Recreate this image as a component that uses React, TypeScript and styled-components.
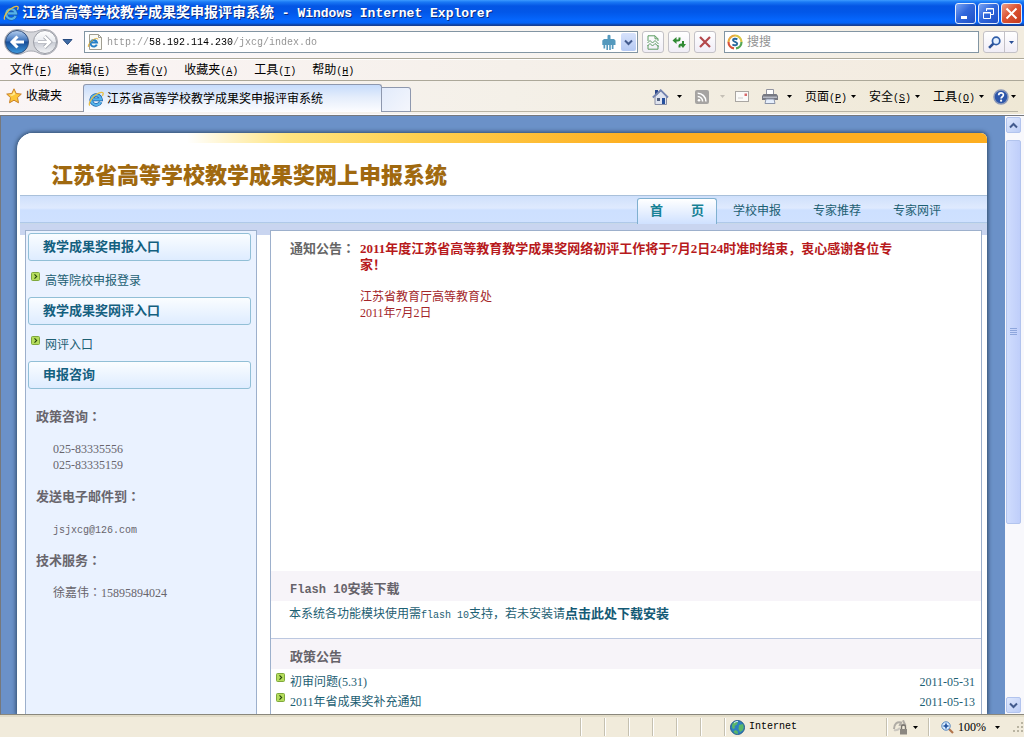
import React from "react";
import styled, { createGlobalStyle } from "styled-components";

const CJK = `"Liberation Serif", "Noto Sans CJK SC", sans-serif`;
const teal = "#1d6073";

const GlobalStyle = createGlobalStyle`
  *, *::before, *::after { box-sizing: border-box; }
  body { margin: 0; font: 12px/16px ${CJK}; color: #000; overflow: hidden; }
  h1, h2, h3, p, ul, dl, dd { margin: 0; padding: 0; }
  ul { list-style: none; }
  a { color: inherit; text-decoration: none; }
  button { margin: 0; padding: 0; border: 0; background: none; font: inherit; color: inherit; white-space: nowrap; }
  input { margin: 0; padding: 0; border: 0; outline: 0; background: none; font: inherit; min-width: 0; }
  svg { display: block; flex: none; }
`;

const Mono = styled.span<{ $size?: number }>`
  font-family: "Liberation Mono", monospace;
  font-size: ${(p) => p.$size ?? 10}px;
  line-height: 1;
`;

/* The TC face centres its full-width colon in the cell. */
const Centered = styled.span`
  font-family: "Noto Sans CJK TC", sans-serif;
  line-height: 1;
`;

/* ---------- window frame ---------- */

const Window = styled.div`
  display: flex;
  flex-direction: column;
  height: 100vh;
  background: #f5f1ec;
`;

const TitleBar = styled.header`
  display: flex;
  align-items: center;
  gap: 3px;
  height: 26px;
  flex: none;
  padding: 0 2px 0 3px;
  background: linear-gradient(#3d9bff 0, #1a79f5 2px, #0455e4 6px, #0257e8 12px, #0566fd 20px, #0463f5 23px, #103f9e 25px, #1a3f8c 26px);
`;

const WindowTitle = styled.h1`
  flex: 1;
  font-size: 14px;
  line-height: 20px;
  font-weight: bold;
  color: #fff;
  text-shadow: 1px 1px 0 #0a2a80;
  white-space: nowrap;
`;

const FrameButtons = styled.div`
  display: flex;
  gap: 2px;
`;

const FrameButton = styled.button<{ $close?: boolean }>`
  display: grid;
  place-items: center;
  width: 21px;
  height: 21px;
  border: 1px solid #e4edfc;
  border-radius: 3px;
  background: ${(p) =>
    p.$close
      ? "linear-gradient(135deg, #eda08a, #dc5434 45%, #c43a1c)"
      : "linear-gradient(135deg, #7aa4f4, #3168dc 45%, #1d4fc6)"};
`;

const AddressRow = styled.div`
  display: flex;
  align-items: center;
  height: 33px;
  flex: none;
  padding: 0 6px 0 4px;
  border-bottom: 1px solid #aca899;
  background: linear-gradient(90deg, #fdf9fc, #f7f3ee 60%, #f2ecdf);
`;

const NavHistory = styled.div`
  display: flex;
  align-items: center;
  width: 80px;
  flex: none;
`;

const AddressBox = styled.div`
  display: flex;
  align-items: center;
  flex: 1;
  height: 22px;
  padding: 0 1px 0 2px;
  border: 1px solid #8295a3;
  background: #fff;
`;

const AddressInput = styled.input`
  flex: 1;
  height: 18px;
  margin-left: 4px;
  font: 10px "Liberation Mono", monospace;
  color: transparent;
  background: linear-gradient(90deg, #909090 42px, #000 42px, #000 126px, #909090 126px);
  background-clip: text;
  -webkit-background-clip: text;
`;

const DropButton = styled.button`
  display: grid;
  place-items: center;
  width: 15px;
  height: 18px;
  margin-left: 5px;
  border-radius: 2px;
  background: linear-gradient(#d7e2fb, #b5c9f3);
`;

const ToolButtons = styled.div`
  display: flex;
  gap: 4px;
  margin: 0 8px 0 4px;
`;

const ToolButton = styled.button`
  display: grid;
  place-items: center;
  width: 22px;
  height: 22px;
  border: 1px solid #c3c1c6;
  border-radius: 3px;
  background: linear-gradient(#fff, #f0edf6);
`;

const SearchBox = styled(AddressBox)`
  flex: 0 1 255px;
  padding-left: 2px;
  gap: 4px;
  input { flex: 1; font-size: 12px; }
  input::placeholder { color: #929292; opacity: 1; }
`;

const SearchButtons = styled.div`
  display: flex;
  margin-left: 4px;
  border: 1px solid #c3c1c6;
  border-radius: 3px;
  background: linear-gradient(#fff, #f0edf6);
  button { display: grid; place-items: center; width: 20px; height: 20px; }
  button + button { width: 13px; border-left: 1px solid #c3c1c6; }
`;

const MenuBar = styled.nav`
  display: flex;
  align-items: center;
  gap: 16px;
  height: 22px;
  flex: none;
  padding-left: 10px;
  border-top: 1px solid #fff;
  border-bottom: 1px solid #aca899;
  background: linear-gradient(90deg, #fbf5f6, #f5f0ea 50%, #f3ebde);
`;

const TabBar = styled.div`
  display: flex;
  align-items: flex-end;
  height: 34px;
  flex: none;
  padding: 0 6px 2px 0;
  background: linear-gradient(90deg, #faf5f6, #f4f0e8 50%, #efe8d5);
  border-bottom: 1px solid #fafafd;
`;

const Favorites = styled.button`
  display: flex;
  align-items: center;
  gap: 4px;
  width: 83px;
  height: 29px;
  flex: none;
  padding: 0 0 2px 6px;
  border-bottom: 1px solid #9a9a9e;
`;

const Tab = styled.button`
  display: flex;
  align-items: center;
  gap: 3px;
  width: 299px;
  height: 28px;
  flex: 0 1 auto;
  padding-left: 4px;
  border: 1px solid #8e98ae;
  border-bottom: 0;
  border-radius: 3px 3px 0 0;
  background: linear-gradient(#c6dbfb, #e4edfb 45%, #fdfdff);
`;

const NewTab = styled.button`
  width: 29px;
  height: 25px;
  flex: none;
  border: 1px solid #8e98ae;
  border-left: 0;
  border-radius: 0 3px 0 0;
  background: linear-gradient(135deg, #e2ebfb, #f4f6fc);
`;

const Commands = styled.div`
  display: flex;
  align-items: center;
  justify-content: flex-end;
  flex: 1;
  height: 28px;
  padding-bottom: 2px;
  border-bottom: 1px solid #b8b3a4;
`;

const Command = styled.button<{ $w: number; $gap?: number }>`
  display: flex;
  align-items: center;
  gap: ${(p) => p.$gap ?? 8}px;
  width: ${(p) => p.$w}px;
  flex: none;
`;

/* ---------- web page ---------- */

const Viewport = styled.main`
  display: flex;
  flex: 1;
  min-height: 0;
  border: 1px solid #76787c;
  border-right: 0;
  border-bottom-color: #8a877c;
`;

const Page = styled.div`
  flex: 1;
  min-width: 0;
  display: flex;
  padding: 17px 18px 0 16px;
  overflow: hidden;
  background: #6b91c8;
`;

const SheetShadow = styled.div`
  flex: 1;
  min-width: 0;
  display: flex;
  border-radius: 16px 6px 0 0;
  box-shadow: 0 0 4px 1px #2f4a68;
`;

const Sheet = styled.div`
  flex: 1;
  min-width: 0;
  display: flex;
  flex-direction: column;
  border-radius: 16px 6px 0 0;
  overflow: hidden;
  background: #fff;
`;

const Banner = styled.header`
  height: 62px;
  flex: none;
  padding: 10px 0 0 34px;
  background: linear-gradient(90deg, #fff 170px, #ffe582 270px, #fed050 400px, #fdae20 620px) no-repeat 0 0 / 100% 10px;
`;

const SiteTitle = styled.h2`
  padding-top: 17px;
  font-size: 22px;
  line-height: 32px;
  font-weight: 900;
  color: #a0690f;
  white-space: nowrap;
`;

const SiteNav = styled.nav`
  display: flex;
  justify-content: flex-end;
  align-items: flex-end;
  height: 29px;
  flex: none;
  margin-left: 3px;
  padding-right: 30px;
  border-top: 1px solid #a9c0da;
  background: linear-gradient(#cfe0fb, #dfeafe 12px, #cde0ff 14px, #cfe1ff 26px, #8fb0d4 27px, #fff 28px);
`;

const SiteTab = styled.a<{ $active?: boolean }>`
  display: flex;
  justify-content: ${(p) => (p.$active ? "space-between" : "center")};
  width: 80px;
  height: 26px;
  padding: ${(p) => (p.$active ? "3px 12px" : "4px 0")};
  border: ${(p) => (p.$active ? "1px solid #7fb0d0" : "0")};
  border-bottom: 0;
  border-radius: 3px 3px 0 0;
  background: ${(p) => (p.$active ? "linear-gradient(#fff, #cfe1ff)" : "none")};
  color: ${(p) => (p.$active ? "#178195" : teal)};
  font-size: ${(p) => (p.$active ? 13 : 12)}px;
  font-weight: ${(p) => (p.$active ? "bold" : "normal")};
  line-height: 18px;
`;

const Columns = styled.div`
  display: flex;
  flex: 1;
  min-height: 0;
  gap: 13px;
  margin-left: 3px;
  padding: 6px 5px 0;
  background: linear-gradient(#c9d5f0, #c9d5f0) no-repeat 0 0 / 100% 11px;
`;

const Sidebar = styled.aside`
  width: 232px;
  flex: none;
  padding: 2px 5px 0 2px;
  border: 1px solid #9db0cc;
  border-bottom: 0;
  background: #eaf2ff;
`;

const SideHeading = styled.h3`
  height: 28px;
  padding-left: 14px;
  border: 1px solid #91bfd6;
  border-radius: 3px;
  background: linear-gradient(#fafdff, #deecff);
  font-size: 13px;
  line-height: 25px;
  color: #14607f;
`;

const SideLink = styled.a`
  display: flex;
  gap: 5px;
  height: 36px;
  padding: 11px 0 0 3px;
  color: ${teal};
  line-height: 18px;
`;

const Contacts = styled.dl`
  padding: 20px 0 0 8px;
  color: #68656c;
  dt { font-size: 13px; font-weight: bold; }
  dd { padding: 16px 0 16px 17px; }
`;

const Content = styled.section`
  flex: 1;
  min-width: 0;
  background: #fff;
  border: 1px solid #9db0cc;
  border-bottom: 0;
`;

const Notice = styled.article`
  display: flex;
  min-height: 340px;
  padding: 10px 20px 0 19px;
  font-size: 13px;
  h3 { width: 70px; flex: none; font-size: 13px; color: #666; }
  p { color: #a3262a; font-size: 12px; padding-bottom: 16px; white-space: nowrap; }
  strong { font-size: 13px; color: #b71a1c; }
`;

const SectionHeading = styled.h3`
  height: 30px;
  padding-left: 19px;
  background: #f7f4f9;
  font-size: 13px;
  line-height: 36px;
  color: #66636a;
`;

const FlashText = styled.p`
  height: 38px;
  padding: 5px 0 0 18px;
  border-bottom: 1px solid #bcc8e0;
  color: ${teal};
  white-space: nowrap;
  a { font-size: 13px; font-weight: bold; color: #145a75; }
`;

const NewsItem = styled.li`
  display: flex;
  gap: 5px;
  height: 20px;
  padding: 4px 6px 0 5px;
  color: ${teal};
  line-height: 18px;
  a { flex: 1; }
`;

const ScrollBar = styled.div`
  display: flex;
  flex-direction: column;
  width: 19px;
  flex: none;
  padding: 1px 3px 1px 1px;
  background: #f8f8fc;
`;

const ScrollButton = styled.button`
  display: grid;
  place-items: center;
  width: 15px;
  height: 16px;
  border: 1px solid #b2c4ee;
  border-radius: 2px;
  background: linear-gradient(135deg, #dfe8fd, #bccdf6);
`;

const ScrollTrack = styled.div`
  flex: 1;
  padding-top: 7px;
`;

const ScrollThumb = styled.div`
  display: grid;
  place-items: center;
  height: 69%;
  border: 1px solid #b2c4ee;
  border-radius: 2px;
  background: linear-gradient(90deg, #cfdcfd, #bfcefa);
`;

/* ---------- status bar ---------- */

const StatusBar = styled.footer`
  display: flex;
  align-items: center;
  justify-content: flex-end;
  height: 22px;
  flex: none;
  border-top: 2px solid #e2dcc8;
  background: #f1ebdb;
`;

const StatusCell = styled.div<{ $w: number }>`
  display: flex;
  align-items: center;
  gap: 4px;
  width: ${(p) => p.$w}px;
  height: 18px;
  padding-left: 5px;
  border-left: 1px solid #c5c0b0;
  box-shadow: inset 1px 0 #fff;
`;

const ZoomCell = styled(StatusCell)`
  padding: 0 12px;
  span { flex: 1; }
`;

/* ---------- icons ---------- */

const IE = ({ size = 16 }: { size?: number }) => (
  <svg width={size} height={size} viewBox="0 0 16 16" fill="none">
    <path d="M12.600 11A4.900 4.900 0 1 1 13 8.400H5" stroke="#1c5fa8" strokeWidth="3.600" />
    <path d="M12.600 11A4.900 4.900 0 1 1 13 8.400H5" stroke="#54b3ea" strokeWidth="2.300" />
    <path d="M1.800 14.600C-.2 12 4.400 5.600 9 3c3-1.800 6-2.400 6.200-.6.1.8-.3 1.600-.8 2.400" stroke="#e9bf45" strokeWidth="1.300" />
  </svg>
);

const Arrow = ({ color = "#000" }: { color?: string }) => (
  <svg width="5" height="3" viewBox="0 0 5 3"><path d="M0 0h5L2.500 3z" fill={color} /></svg>
);

const Chevron = ({ up }: { up?: boolean }) => (
  <svg width="9" height="7" viewBox="0 0 9 7" fill="none">
    <path d={up ? "M1 5.500 4.500 2 8 5.500" : "M1 1.500 4.500 5 8 1.500"} stroke="#435b8e" strokeWidth="2" />
  </svg>
);

const Bullet = () => (
  <svg width="9" height="9" viewBox="0 0 9 9" fill="none">
    <rect x=".5" y=".5" width="8" height="8" rx="1" fill="#b4dc5c" stroke="#7fa83c" />
    <path d="M3.500 2.300 5.700 4.500 3.500 6.700" stroke="#24420c" strokeWidth="1.100" />
  </svg>
);

const BackForward = () => (
  <svg width="55" height="28" viewBox="0 0 55 28" fill="none">
    <defs>
      <linearGradient id="back" x2="0" y2="1">
        <stop stopColor="#b8d1f0" /><stop offset=".45" stopColor="#3c72bb" />
        <stop offset=".5" stopColor="#174c98" /><stop offset="1" stopColor="#3f9ce0" />
      </linearGradient>
      <linearGradient id="fwd" x2="0" y2="1">
        <stop stopColor="#fff" /><stop offset=".48" stopColor="#e9ebf0" />
        <stop offset=".5" stopColor="#c7cad3" /><stop offset="1" stopColor="#f5f6f8" />
      </linearGradient>
    </defs>
    <path d="M13 1.500C20 1.500 20 4 27 4s7-2.500 14-2.500a12.500 12.500 0 0 1 0 25C34 26.500 34 23 27 23s-7 3.500-14 3.500a12.500 12.500 0 0 1 0-25Z" fill="#d4d5da" stroke="#a9abb3" />
    <circle cx="13" cy="14" r="11.500" fill="url(#back)" stroke="#35517d" />
    <path d="M20 14H8m5.500-5.500L8 14l5.500 5.500" stroke="#fff" strokeWidth="3" />
    <circle cx="41" cy="14" r="11.500" fill="url(#fwd)" stroke="#9a9ca5" />
    <path d="M34 14h12m-5.500-5.500L46 14l-5.500 5.500" stroke="#a8abb4" strokeWidth="4" />
    <path d="M34 14h12m-5.500-5.500L46 14l-5.500 5.500" stroke="#fff" strokeWidth="2.400" />
  </svg>
);

const PageIE = () => (
  <svg width="16" height="18" viewBox="0 0 16 18" fill="none">
    <path d="M2.500 1.500h9l3 3v12h-12z" fill="#fbfbf5" stroke="#a09e92" />
    <path d="M11.500 1.500v3h3" stroke="#a09e92" />
    <path d="M9.800 11.600A3.300 3.300 0 1 1 10 9.500H4.500" stroke="#2681c8" strokeWidth="2" />
    <path d="M1.500 14C.5 12 4 7.500 7.500 6c2-.8 3.500-.8 3.300.4" stroke="#e0ae32" />
  </svg>
);

const Paw = () => (
  <svg width="14" height="16" viewBox="0 0 14 16">
    <path d="M5.500 1.500q1.500-1.500 3 0V5H12l1.500 1.500V11h-2v4H9.800v-4h-1v5H7.200v-5H6v5H4.400v-5H3.200v3.500H1.500V11H.3V6.500L2 5h3.500z" fill="#5499bd" />
  </svg>
);

const Compat = () => (
  <svg width="12" height="15" viewBox="0 0 12 15" fill="none" stroke="#5d9d63">
    <path d="M1 6V.8h7l3 3V6M8 .8v3h3M1 10v4.200h10V10" />
    <path d="m.5 8 2.500-2.500L5.500 8 8 5.500 11.500 9M.5 11 3 8.500 5.500 11 8 8.500l3.500 3" />
  </svg>
);

const Refresh = () => (
  <svg width="14" height="13" viewBox="0 0 14 13" fill="none" stroke="#2f8a33" strokeWidth="2">
    <path d="M7.500 1.500v1.500q0 1.500-1.500 1.500H3" />
    <path d="M4.500 1v7L.5 4.500z" fill="#2f8a33" stroke="none" />
    <path d="M7.500 11.500V10q0-1.500 2-1.500L11 8.500V5" />
    <path d="M7.500 8h6.500L11 12z" fill="#2f8a33" stroke="none" />
  </svg>
);

const Stop = () => (
  <svg width="12" height="12" viewBox="0 0 12 12" fill="none" stroke="#b3474b" strokeWidth="2.200">
    <path d="M1 1l10 10M11 1 1 11" />
  </svg>
);

const Soso = () => (
  <svg width="16" height="16" viewBox="0 0 16 16" fill="none">
    <path d="M8 1.500A6.500 6.500 0 0 1 14.500 8" stroke="#d9c445" strokeWidth="2.200" />
    <path d="M14.500 8A6.500 6.500 0 0 1 9 14.400" stroke="#57a754" strokeWidth="2.200" />
    <path d="M7 14.400A6.500 6.500 0 0 1 1.500 8" stroke="#d9533a" strokeWidth="2.200" />
    <path d="M1.500 8A6.500 6.500 0 0 1 8 1.500" stroke="#e8a93e" strokeWidth="2.200" />
    <path d="M10.300 5.500C9 4.300 5.900 4.500 6 6.300S10.300 7.800 10.200 9.700 6.900 11.700 5.500 10.300" stroke="#27689c" strokeWidth="1.900" />
  </svg>
);

const Magnifier = () => (
  <svg width="13" height="13" viewBox="0 0 12 12" fill="none">
    <path d="M5 7 1 11" stroke="#2a4f95" strokeWidth="2.400" />
    <circle cx="7.500" cy="4.500" r="3.400" fill="#e4f0ff" stroke="#2f5da8" strokeWidth="1.600" />
  </svg>
);

const Star = () => (
  <svg width="16" height="16" viewBox="0 0 16 16">
    <path d="m8 .8 2.200 4.700 5.100.6-3.800 3.500 1 5.200L8 12.200l-4.500 2.600 1-5.200L.7 6.100l5.100-.6z" fill="#fcc638" stroke="#c9812a" />
    <path d="m8 3 1.400 3.300L6 8l-3-1.200 3.400-.5z" fill="#ffe990" />
  </svg>
);

const Home = () => (
  <svg width="17" height="16" viewBox="0 0 17 16">
    <path d="M3 1h3v5H3z" fill="#2b4689" />
    <path d="M3 7.500 9 2l5.500 5.500V15.500H3z" fill="#dfe3ee" stroke="#8a8fa5" />
    <path d="M.8 8.500 8.700 1.200 16 8.500" fill="none" stroke="#7484b0" strokeWidth="1.800" />
    <path d="M10 9h3v6h-3z" fill="#27509c" /><path d="M5 9h3v3H5z" fill="#4f5e80" />
  </svg>
);

const Rss = () => (
  <svg width="14" height="14" viewBox="0 0 14 14" fill="none">
    <rect width="14" height="14" rx="2" fill="#a6a4a2" />
    <circle cx="4" cy="10.300" r="1.300" fill="#fff" />
    <path d="M2.700 6.500a4.900 4.900 0 0 1 4.900 4.900M2.700 3.200a8.200 8.200 0 0 1 8.200 8.200" stroke="#fff" strokeWidth="1.500" />
  </svg>
);

const Mail = () => (
  <svg width="14" height="11" viewBox="0 0 14 11">
    <rect x=".5" y=".5" width="13" height="10" fill="#fbfaf8" stroke="#a9a6a2" />
    <path d="M9.500 2.500h2.500V5H9.500z" fill="#d9686a" /><path d="M3 7h5" stroke="#ccc" />
  </svg>
);

const Printer = () => (
  <svg width="16" height="15" viewBox="0 0 16 15">
    <path d="M4.500.5h7V6h-7z" fill="#fff" stroke="#9294a0" />
    <path d="M1.500 5h13L16 7v4H0V7z" fill="#777982" /><path d="M1 7.500h14v1.500H1z" fill="#b6b9c3" />
    <path d="M4 10h8l1 4.500H3z" fill="#e6effc" stroke="#8b94a8" />
  </svg>
);

const Help = () => (
  <svg width="16" height="16" viewBox="0 0 16 16" fill="none">
    <circle cx="8" cy="8" r="7" fill="#2c56aa" stroke="#8b98b8" strokeWidth="1.500" />
    <path d="M5.700 6.300c0-3.200 4.700-3 4.700-.3 0 1.700-2.300 1.800-2.300 3.600" stroke="#fff" strokeWidth="1.700" />
    <circle cx="8.100" cy="11.700" r="1.100" fill="#fff" />
  </svg>
);

const Globe = () => (
  <svg width="15" height="15" viewBox="0 0 15 15">
    <circle cx="7.500" cy="7.500" r="7" fill="#2c7fc0" stroke="#255b87" />
    <path d="M3 3q3-2.500 5-1.500L7 4.500 4.500 6 5 8l-2 1Q1 6 3 3M9 5l4-1q1.500 4-.5 6.500L10 12 8.500 9zM5 10l2.500 1 .5 3q-3 0-4.500-2z" fill="#5bb767" />
    <path d="M4 3q2-2 4-1.500" stroke="#cdeafe" fill="none" />
  </svg>
);

const Lock = () => (
  <svg width="17" height="15" viewBox="0 0 17 15" fill="none">
    <path d="M2 9C2 4 5 1.500 9 2.500l-1 2.300 5-.3L11 .3" stroke="#b0aca5" strokeWidth="2" />
    <path d="M2 10q3 1 6-2" stroke="#cbc7bf" strokeWidth="2" />
    <path d="M9.500 9V7a2 2 0 0 1 4 0v2" stroke="#77736d" strokeWidth="1.400" />
    <path d="M8 9h7v5.500H8z" fill="#8b8781" />
  </svg>
);

const ZoomIn = () => (
  <svg width="13" height="13" viewBox="0 0 13 13" fill="none">
    <path d="m8 8 4 4" stroke="#b2744b" strokeWidth="2.200" />
    <circle cx="5" cy="5" r="4.200" fill="#d9ecff" stroke="#4f83bd" />
    <path d="M5 2.500v5M2.500 5h5" stroke="#1c4f9c" strokeWidth="1.600" />
  </svg>
);

const Grip = () => (
  <svg width="12" height="12" viewBox="0 0 12 12" fill="#b9b4a2">
    <path d="M9 1h2v2H9zM9 5h2v2H9zM5 5h2v2H5zM9 9h2v2H9zM5 9h2v2H5zM1 9h2v2H1z" />
  </svg>
);

const Label = ({ text, mark }: { text: string; mark: string }) => (
  <span>{text}<Mono>(<u>{mark}</u>)</Mono></span>
);

const Colon = () => <Centered>：</Centered>;

const menus = [
  ["文件", "F"], ["编辑", "E"], ["查看", "V"], ["收藏夹", "A"], ["工具", "T"], ["帮助", "H"],
];

const news = [
  { title: "初审问题(5.31)", date: "2011-05-31" },
  { title: "2011年省成果奖补充通知", date: "2011-05-13" },
];

export default function App() {
  return (
    <Window>
      <GlobalStyle />
      <TitleBar>
        <IE />
        <WindowTitle>
          江苏省高等学校教学成果奖申报评审系统<Mono $size={13}> - Windows Internet Explorer</Mono>
        </WindowTitle>
        <FrameButtons>
          <FrameButton aria-label="最小化">
            <svg width="13" height="13"><path d="M2 9h6v3H2z" fill="#fff" /></svg>
          </FrameButton>
          <FrameButton aria-label="还原">
            <svg width="13" height="13" fill="none" stroke="#fff"><path d="M4.500 4V1.500h7v6H9M4 2h8M1.500 5.500h7v6h-7zM1 6h8" /></svg>
          </FrameButton>
          <FrameButton $close aria-label="关闭">
            <svg width="13" height="13" stroke="#fff" strokeWidth="2"><path d="M1.500 1.500l10 10M11.500 1.500l-10 10" /></svg>
          </FrameButton>
        </FrameButtons>
      </TitleBar>

      <AddressRow>
        <NavHistory>
          <BackForward />
          <svg width="16" height="8" viewBox="0 0 16 8"><path d="M4 1.500h9L8.500 6.500z" fill="#3e6aa5" stroke="#274b80" /></svg>
        </NavHistory>
        <AddressBox>
          <PageIE />
          <AddressInput aria-label="地址" defaultValue="http://58.192.114.230/jxcg/index.do" />
          <Paw />
          <DropButton aria-label="地址列表"><Chevron /></DropButton>
        </AddressBox>
        <ToolButtons>
          <ToolButton aria-label="兼容性视图"><Compat /></ToolButton>
          <ToolButton aria-label="刷新"><Refresh /></ToolButton>
          <ToolButton aria-label="停止"><Stop /></ToolButton>
        </ToolButtons>
        <SearchBox>
          <Soso />
          <input aria-label="搜搜" placeholder="搜搜" />
        </SearchBox>
        <SearchButtons>
          <button aria-label="搜索"><Magnifier /></button>
          <button aria-label="搜索选项"><Arrow color="#2a4f95" /></button>
        </SearchButtons>
      </AddressRow>

      <MenuBar>
        {menus.map(([text, mark]) => (
          <button key={mark}><Label text={text} mark={mark} /></button>
        ))}
      </MenuBar>

      <TabBar>
        <Favorites><Star />收藏夹</Favorites>
        <Tab><IE />江苏省高等学校教学成果奖申报评审系统</Tab>
        <NewTab aria-label="新选项卡" />
        <Commands>
          <Command $w={43} aria-label="主页"><Home /><Arrow /></Command>
          <Command $w={40} $gap={11} aria-label="源"><Rss /><Arrow color="#c5c0b6" /></Command>
          <Command $w={27} aria-label="阅读邮件"><Mail /></Command>
          <Command $w={43} $gap={9} aria-label="打印"><Printer /><Arrow /></Command>
          <Command $w={64} $gap={4}><Label text="页面" mark="P" /><Arrow /></Command>
          <Command $w={64} $gap={4}><Label text="安全" mark="S" /><Arrow /></Command>
          <Command $w={60} $gap={4}><Label text="工具" mark="O" /><Arrow /></Command>
          <Command $w={25} $gap={2} aria-label="帮助"><Help /><Arrow /></Command>
        </Commands>
      </TabBar>

      <Viewport>
        <Page>
          <SheetShadow>
            <Sheet>
              <Banner>
                <SiteTitle>江苏省高等学校教学成果奖网上申报系统</SiteTitle>
              </Banner>
              <SiteNav>
                <SiteTab $active href="#home"><span>首</span><span>页</span></SiteTab>
                <SiteTab href="#apply">学校申报</SiteTab>
                <SiteTab href="#recommend">专家推荐</SiteTab>
                <SiteTab href="#review">专家网评</SiteTab>
              </SiteNav>
              <Columns>
                <Sidebar>
                  <SideHeading>教学成果奖申报入口</SideHeading>
                  <SideLink href="#login"><Bullet />高等院校申报登录</SideLink>
                  <SideHeading>教学成果奖网评入口</SideHeading>
                  <SideLink href="#entry"><Bullet />网评入口</SideLink>
                  <SideHeading>申报咨询</SideHeading>
                  <Contacts>
                    <dt>政策咨询<Colon /></dt>
                    <dd>025-83335556<br />025-83335159</dd>
                    <dt>发送电子邮件到<Colon /></dt>
                    <dd><Mono>jsjxcg@126.com</Mono></dd>
                    <dt>技术服务<Colon /></dt>
                    <dd>徐嘉伟<Colon />15895894024</dd>
                  </Contacts>
                </Sidebar>
                <Content>
                  <Notice>
                    <h3>通知公告<Colon /></h3>
                    <div>
                      <p>
                        <strong>
                          2011年度江苏省高等教育教学成果奖网络初评工作将于7月2日24时准时结束，衷心感谢各位专
                          <br />家！
                        </strong>
                      </p>
                      <p>江苏省教育厅高等教育处<br />2011年7月2日</p>
                    </div>
                  </Notice>
                  <SectionHeading><Mono $size={12}>Flash 10</Mono>安装下载</SectionHeading>
                  <FlashText>
                    本系统各功能模块使用需<Mono>flash 10</Mono>支持，若未安装请<a href="#flash">点击此处下载安装</a>
                  </FlashText>
                  <SectionHeading>政策公告</SectionHeading>
                  <ul>
                    {news.map((n) => (
                      <NewsItem key={n.date}>
                        <Bullet /><a href="#news">{n.title}</a><time>{n.date}</time>
                      </NewsItem>
                    ))}
                  </ul>
                </Content>
              </Columns>
            </Sheet>
          </SheetShadow>
        </Page>
        <ScrollBar>
          <ScrollButton aria-label="向上"><Chevron up /></ScrollButton>
          <ScrollTrack>
            <ScrollThumb>
              <svg width="7" height="8" stroke="#8ea6dc"><path d="M0 .5h7M0 2.500h7M0 4.500h7M0 6.500h7" /></svg>
            </ScrollThumb>
          </ScrollTrack>
          <ScrollButton aria-label="向下"><Chevron /></ScrollButton>
        </ScrollBar>
      </Viewport>

      <StatusBar>
        {[0, 1, 2, 3, 4, 5].map((i) => <StatusCell key={i} $w={24} />)}
        <StatusCell $w={162}><Globe /><Mono>Internet</Mono></StatusCell>
        <StatusCell $w={42}><Lock /><Arrow /></StatusCell>
        <ZoomCell $w={84}><ZoomIn /><span>100%</span><Arrow /></ZoomCell>
        <Grip />
      </StatusBar>
    </Window>
  );
}
